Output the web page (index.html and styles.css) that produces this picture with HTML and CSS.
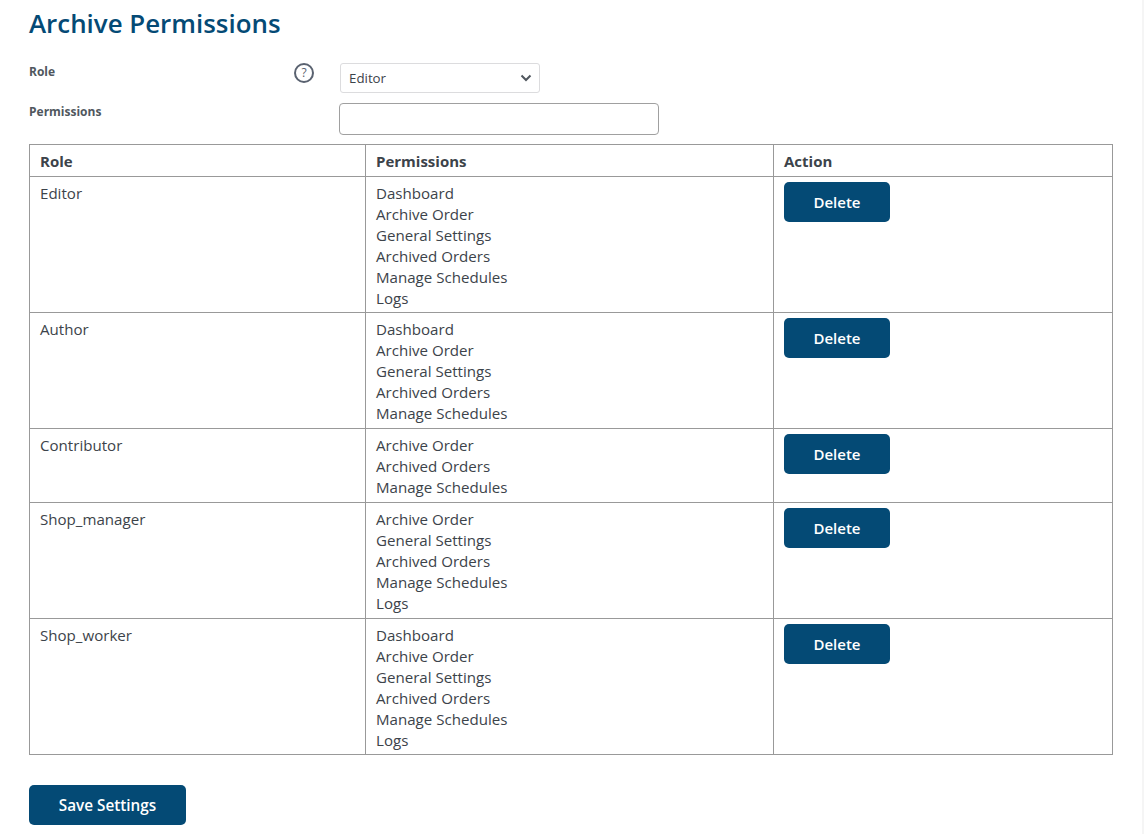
FILE: index.html
```html
<!DOCTYPE html>
<html lang="en">
<head>
  <meta charset="UTF-8">
  <meta name="viewport" content="width=device-width, initial-scale=1.0">
  <title>Archive Permissions</title>
  <link rel="stylesheet" href="styles.css">
</head>
<body>
  <h1 class="title">Archive Permissions</h1>

  <div class="form-row role-row">
    <label class="form-label">Role</label>
    <span class="help-icon">
      <svg width="20" height="20" viewBox="0 0 20 20">
        <circle cx="10" cy="10" r="9" fill="none" stroke="#5a6270" stroke-width="2"/>
        <text x="10" y="14" text-anchor="middle" class="help-mark">?</text>
      </svg>
    </span>
    <div class="select-box">
      <span>Editor</span>
      <svg width="12" height="8" viewBox="0 0 12 8">
        <path d="M1.5 1.5 L6 6 L10.5 1.5" fill="none" stroke="#50575e" stroke-width="2"/>
      </svg>
    </div>
  </div>

  <div class="form-row perm-row">
    <label class="form-label">Permissions</label>
    <input class="perm-input" type="text">
  </div>

  <table class="perm-table">
    <thead>
      <tr>
        <th class="col-role">Role</th>
        <th class="col-perm">Permissions</th>
        <th>Action</th>
      </tr>
    </thead>
    <tbody>
      <tr class="tall">
        <td>Editor</td>
        <td>Dashboard<br>Archive Order<br>General Settings<br>Archived Orders<br>Manage Schedules<br>Logs</td>
        <td><button class="btn btn-delete">Delete</button></td>
      </tr>
      <tr>
        <td>Author</td>
        <td>Dashboard<br>Archive Order<br>General Settings<br>Archived Orders<br>Manage Schedules</td>
        <td><button class="btn btn-delete">Delete</button></td>
      </tr>
      <tr>
        <td>Contributor</td>
        <td>Archive Order<br>Archived Orders<br>Manage Schedules</td>
        <td><button class="btn btn-delete">Delete</button></td>
      </tr>
      <tr>
        <td>Shop_manager</td>
        <td>Archive Order<br>General Settings<br>Archived Orders<br>Manage Schedules<br>Logs</td>
        <td><button class="btn btn-delete">Delete</button></td>
      </tr>
      <tr class="tall">
        <td>Shop_worker</td>
        <td>Dashboard<br>Archive Order<br>General Settings<br>Archived Orders<br>Manage Schedules<br>Logs</td>
        <td><button class="btn btn-delete">Delete</button></td>
      </tr>
    </tbody>
  </table>

  <button class="btn btn-save">Save Settings</button>
</body>
</html>
```

FILE: styles.css
```css
html {
  background: #f5f5f5;
}

body {
  margin: 0;
  width: 1142px;
  min-height: 100vh;
  box-sizing: border-box;
  padding: 4px 29px 0 29px;
  background: #fff;
  font-family: "Open Sans", "Noto Sans", sans-serif;
  font-size: 15.1px;
  line-height: 21px;
  color: #3c434a;
}

.title {
  margin: 0;
  font-size: 25.9px;
  line-height: 38px;
  font-weight: 600;
  color: #044a75;
}

.form-row {
  display: flex;
  align-items: flex-start;
}

.role-row {
  margin-top: 21px;
  height: 30px;
}

.perm-row {
  margin-top: 10px;
  height: 41px;
}

.form-label {
  font-size: 12px;
  line-height: 18px;
  font-weight: 700;
  color: #50575e;
}

.role-row .form-label {
  width: 265px;
}

.perm-row .form-label {
  width: 310px;
}

.help-icon {
  width: 46px;
  height: 20px;
  display: block;
}

.help-mark {
  font-size: 12px;
  fill: #5a6270;
}

.select-box {
  width: 200px;
  height: 30px;
  box-sizing: border-box;
  border: 1px solid #dcdcde;
  border-radius: 3px;
  padding: 0 7px 0 8px;
  display: flex;
  align-items: center;
  justify-content: space-between;
  font-size: 13.3px;
}

.perm-input {
  width: 320px;
  height: 32px;
  box-sizing: border-box;
  border: 1px solid #a0a0a0;
  border-radius: 4px;
  background: #fff;
}

.perm-table {
  width: 1084px;
  border-collapse: collapse;
  table-layout: fixed;
}

.perm-table th,
.perm-table td {
  border: 1px solid #999;
  padding: 6px 10px 4px;
  text-align: left;
  vertical-align: top;
}

.perm-table .tall td {
  padding-bottom: 3px;
}

.perm-table th {
  font-size: 15px;
  font-weight: 700;
}

.col-role {
  width: 315px;
}

.col-perm {
  width: 387px;
}

.btn {
  display: block;
  border: none;
  border-radius: 5px;
  background: #044a75;
  color: #fff;
  font-family: inherit;
  font-size: 15px;
  font-weight: 600;
  height: 40px;
  cursor: pointer;
}

.btn-delete {
  width: 106px;
  margin-top: -1px;
}

.btn-save {
  width: 157px;
  margin-top: 30px;
  font-size: 15.3px;
}
```
